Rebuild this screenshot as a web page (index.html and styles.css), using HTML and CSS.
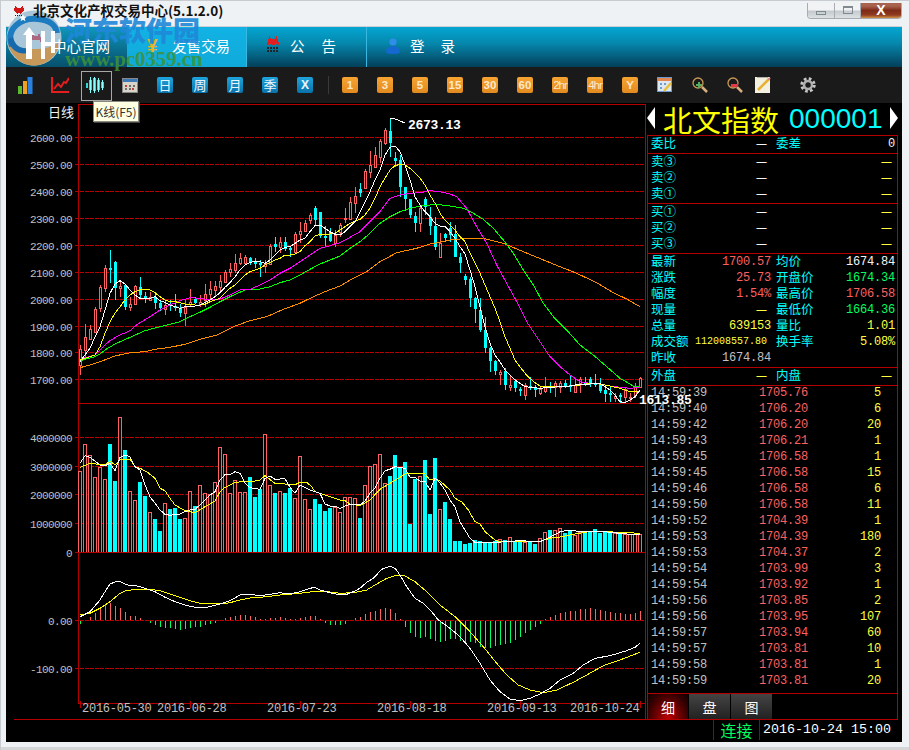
FILE: index.html
```html
<!DOCTYPE html>
<html lang="zh-CN">
<head>
<meta charset="utf-8">
<title>北京文化产权交易中心</title>
<link rel="stylesheet" href="styles.css">
</head>
<body>
<div class="window">
  <header class="titlebar">
    <svg class="app-icon" width="12" height="11" viewBox="0 0 12 11"><path fill="#d01818" d="M2 0h1v1h1v1h4V1h1V0h1v2h1v3h-1v1H9v1H8v1H7V7H5v1H4V7H3V6H2V5H1V2h1z"/><path fill="#202020" d="M2 9h1v1H2zM4 9h1v1H4zM6 9h1v1H6zM8 9h1v1H8z"/></svg>
    <span class="app-title">北京文化产权交易中心(5.1.2.0)</span>
    <div class="winbtns">
      <span class="winbtn win-min"><i></i></span>
      <span class="winbtn win-max"><i></i></span>
      <span class="winbtn win-close">X</span>
    </div>
  </header>

  <nav class="nav">
    <a class="nav-item nav-home"><span class="nav-over">中心官网</span></a>
    <a class="nav-item nav-active"><span class="yen">¥</span><span>发售交易</span></a>
    <a class="nav-item nav-notice">
      <svg width="14" height="19" viewBox="0 0 14 19"><path fill="#e02020" d="M3 0h1v2h1v1h4V2h1V0h1v3h1v3h1v3h-2V8H9v1H5V8H3v1H1V6h1V3h1z"/><path fill="#202428" d="M1 11h2v2H1zM4 11h2v2H4zM7 11h2v2H7zM10 11h2v2h-2zM1 14h2v2H1zM4 14h2v2H4zM7 14h2v2H7zM10 14h2v2h-2z"/></svg>
      <span class="nav-wide">公告</span>
    </a>
    <a class="nav-item nav-login">
      <svg width="14" height="16" viewBox="0 0 14 16"><circle cx="7" cy="4" r="3.6" fill="#2f8fe8"/><path fill="#1468d0" d="M7 8c4 0 7 3 7 6 0 1.300-3 2-7 2s-7-.7-7-2c0-3 3-6 7-6z"/></svg>
      <span class="nav-wide">登录</span>
    </a>
  </nav>

  <div class="toolbar">
    <span class="tool">
      <svg width="16" height="17" viewBox="0 0 16 17"><rect x="1" y="9" width="4" height="8" fill="#5cb82c"/><rect x="6" y="4" width="4" height="13" fill="#f0a020"/><rect x="10.500" width="5" height="17" fill="#2a80e0"/></svg>
    </span>
    <span class="tool">
      <svg width="18" height="16" viewBox="0 0 18 16"><path fill="none" stroke="#e41e1e" stroke-width="2" d="M1 0v15h18"/><path fill="none" stroke="#e41e1e" stroke-width="2" d="M3 12l4-5 3 3 3-5 2 1 3-5"/></svg>
    </span>
    <span class="tool tool-selected">
      <svg width="18" height="16" viewBox="0 0 18 16"><g fill="#35d8d0"><rect x="0" y="6" width="2" height="5"/><rect x="3" y="3" width="3" height="10"/><rect x="7" y="1" width="3" height="13"/><rect x="11" y="3" width="3" height="10"/><rect x="15" y="5" width="3" height="6"/></g><g fill="#8ff"><rect x="4" y="0" width="1" height="16"/><rect x="8" y="0" width="1" height="16"/><rect x="12" y="1" width="1" height="14"/><rect x="16" y="3" width="1" height="10"/></g></svg>
    </span>
    <span class="tool">
      <svg width="16" height="16" viewBox="0 0 16 16"><rect x=".5" y="1.500" width="15" height="14" fill="#d8d4c8" stroke="#888"/><rect x="1" y="2" width="14" height="3" fill="#3a78b8"/><path fill="#c04040" d="M3 8h2v2H3zM10 11h2v2h-2z"/><path fill="#707070" d="M7 8h2v2H7zM11 8h2v2h-2zM3 11h2v2H3zM7 11h2v2H7z"/></svg>
    </span>
    <span class="tool btn-blue">日</span>
    <span class="tool btn-blue">周</span>
    <span class="tool btn-blue">月</span>
    <span class="tool btn-blue">季</span>
    <span class="tool btn-blue btn-x">X</span>
    <span class="tool-sep"></span>
    <span class="tool btn-orange">1</span>
    <span class="tool btn-orange">3</span>
    <span class="tool btn-orange">5</span>
    <span class="tool btn-orange">15</span>
    <span class="tool btn-orange">30</span>
    <span class="tool btn-orange">60</span>
    <span class="tool btn-orange btn-narrow">2hr</span>
    <span class="tool btn-orange btn-narrow">4hr</span>
    <span class="tool btn-orange">Y</span>
    <span class="tool">
      <svg width="16" height="16" viewBox="0 0 16 16"><rect x=".5" y=".5" width="14" height="14" fill="#dfe8f0" stroke="#6a9ad0"/><rect x="1" y="1" width="13" height="3" fill="#e08850"/><path fill="#6aa0d0" d="M3 6h2v2H3zM7 6h2v2H7zM3 10h2v2H3z"/><path fill="none" stroke="#e8c040" stroke-width="2.500" d="M7 14l7-8"/></svg>
    </span>
    <span class="tool">
      <svg width="16" height="16" viewBox="0 0 16 16"><circle cx="6" cy="6" r="5" fill="none" stroke="#c89858" stroke-width="1.300"/><path stroke="#d8b080" stroke-width="2.500" d="M10 10l5 5"/><path fill="#50b060" d="M6 5h2v2h2v2H8v2H6V9H4V7h2z"/></svg>
    </span>
    <span class="tool tool-zoomout">
      <svg width="16" height="16" viewBox="0 0 16 16"><circle cx="6" cy="6" r="5" fill="none" stroke="#c89858" stroke-width="1.300"/><path stroke="#d8b080" stroke-width="2.500" d="M10 10l5 5"/><rect x="4" y="7" width="7" height="3" fill="#e03848"/></svg>
    </span>
    <span class="tool tool-note">
      <svg width="16" height="16" viewBox="0 0 16 16"><rect width="15" height="16" fill="#f4f0e0"/><path stroke="#b0b0a8" d="M2 .5h11"/><path fill="none" stroke="#e8b030" stroke-width="2.500" d="M3 13L14 2"/><path stroke="#e070a0" stroke-width="2" d="M13.500 2.500l1.500-1.500"/></svg>
    </span>
    <span class="tool">
      <svg width="16" height="16" viewBox="0 0 16 16"><circle cx="8" cy="8" r="6.200" fill="none" stroke="#c8c8c8" stroke-width="3" stroke-dasharray="2.600 2.270"/><circle cx="8" cy="8" r="4" fill="none" stroke="#b0b0b0" stroke-width="2.500"/></svg>
    </span>
    <span class="tooltip">K线(F5)</span>
  </div>

  <main class="main">
    <div class="chart"><svg id="chart" class="chart-svg" width="641" height="617" viewBox="6 103 641 617"></svg></div>
    <aside class="side">
      <div class="side-title">
        <span class="arrow arrow-left"></span>
        <span class="stock-name">北文指数</span>
        <span class="stock-code">000001</span>
        <span class="arrow arrow-right"></span>
      </div>
      <div class="side-box">
        <section class="sec sec-one">
          <div class="qrow"><div class="half"><span class="lab">委比</span><span class="dash white">一</span></div><div class="half"><span class="lab">委差</span><span class="num white">0</span></div></div>
        </section>
        <section class="sec sec-book">
          <div class="qrow"><div class="half"><span class="lab">卖③</span><span class="dash white">一</span></div><div class="half half-end"><span class="dash yellow">一</span></div></div>
          <div class="qrow"><div class="half"><span class="lab">卖②</span><span class="dash white">一</span></div><div class="half half-end"><span class="dash yellow">一</span></div></div>
          <div class="qrow"><div class="half"><span class="lab">卖①</span><span class="dash white">一</span></div><div class="half half-end"><span class="dash yellow">一</span></div></div>
        </section>
        <section class="sec sec-book">
          <div class="qrow"><div class="half"><span class="lab">买①</span><span class="dash white">一</span></div><div class="half half-end"><span class="dash yellow">一</span></div></div>
          <div class="qrow"><div class="half"><span class="lab">买②</span><span class="dash white">一</span></div><div class="half half-end"><span class="dash yellow">一</span></div></div>
          <div class="qrow"><div class="half"><span class="lab">买③</span><span class="dash white">一</span></div><div class="half half-end"><span class="dash yellow">一</span></div></div>
        </section>
        <section class="sec sec-stats">
          <div class="qrow"><div class="half"><span class="lab">最新</span><span class="num red">1700.57</span></div><div class="half"><span class="lab">均价</span><span class="num white">1674.84</span></div></div>
          <div class="qrow"><div class="half"><span class="lab">涨跌</span><span class="num red">25.73</span></div><div class="half"><span class="lab">开盘价</span><span class="num green">1674.34</span></div></div>
          <div class="qrow"><div class="half"><span class="lab">幅度</span><span class="num red">1.54%</span></div><div class="half"><span class="lab">最高价</span><span class="num red">1706.58</span></div></div>
          <div class="qrow"><div class="half"><span class="lab">现量</span><span class="dash yellow">一</span></div><div class="half"><span class="lab">最低价</span><span class="num green">1664.36</span></div></div>
          <div class="qrow"><div class="half"><span class="lab">总量</span><span class="num yellow">639153</span></div><div class="half"><span class="lab">量比</span><span class="num yellow">1.01</span></div></div>
          <div class="qrow"><div class="half"><span class="lab">成交额</span><span class="num yellow num-small">112008557.80</span></div><div class="half"><span class="lab">换手率</span><span class="num yellow">5.08%</span></div></div>
          <div class="qrow"><div class="half"><span class="lab">昨收</span><span class="num gray">1674.84</span></div><div class="half"></div></div>
        </section>
        <section class="sec sec-one">
          <div class="qrow"><div class="half"><span class="lab">外盘</span><span class="dash yellow">一</span></div><div class="half"><span class="lab">内盘</span><span class="dash yellow">一</span></div></div>
        </section>
        <section class="sec trades">
          <div class="trow"><span>14:59:39</span><span class="red">1705.76</span><span class="yellow">5</span></div>
          <div class="trow"><span>14:59:40</span><span class="red">1706.20</span><span class="yellow">6</span></div>
          <div class="trow"><span>14:59:42</span><span class="red">1706.20</span><span class="yellow">20</span></div>
          <div class="trow"><span>14:59:43</span><span class="red">1706.21</span><span class="yellow">1</span></div>
          <div class="trow"><span>14:59:45</span><span class="red">1706.58</span><span class="yellow">1</span></div>
          <div class="trow"><span>14:59:45</span><span class="red">1706.58</span><span class="yellow">15</span></div>
          <div class="trow"><span>14:59:46</span><span class="red">1706.58</span><span class="yellow">6</span></div>
          <div class="trow"><span>14:59:50</span><span class="red">1706.58</span><span class="yellow">11</span></div>
          <div class="trow"><span>14:59:52</span><span class="red">1704.39</span><span class="yellow">1</span></div>
          <div class="trow"><span>14:59:53</span><span class="red">1704.39</span><span class="yellow">180</span></div>
          <div class="trow"><span>14:59:53</span><span class="red">1704.37</span><span class="yellow">2</span></div>
          <div class="trow"><span>14:59:54</span><span class="red">1703.99</span><span class="yellow">3</span></div>
          <div class="trow"><span>14:59:54</span><span class="red">1703.92</span><span class="yellow">1</span></div>
          <div class="trow"><span>14:59:56</span><span class="red">1703.85</span><span class="yellow">2</span></div>
          <div class="trow"><span>14:59:56</span><span class="red">1703.95</span><span class="yellow">107</span></div>
          <div class="trow"><span>14:59:57</span><span class="red">1703.94</span><span class="yellow">60</span></div>
          <div class="trow"><span>14:59:57</span><span class="red">1703.81</span><span class="yellow">10</span></div>
          <div class="trow"><span>14:59:58</span><span class="red">1703.81</span><span class="yellow">1</span></div>
          <div class="trow"><span>14:59:59</span><span class="red">1703.81</span><span class="yellow">20</span></div>
        </section>
        <div class="tabs">
          <span class="tab tab-active">细</span>
          <span class="tab">盘</span>
          <span class="tab">图</span>
        </div>
      </div>
    </aside>
  </main>

  <footer class="status">
    <span class="status-conn">连接</span>
    <span class="status-time">2016-10-24 15:00</span>
  </footer>

  <div class="watermark">
    <svg class="wm-logo" width="58" height="58" viewBox="0 0 58 58">
      <circle cx="29" cy="29" r="27.500" fill="#a8c6d8"/>
      <path fill="#c6985a" d="M1.700 31C5 46 16 56.500 29 56.500S53 46 56.300 31C48 39 38 40 29 40S10 39 1.700 31z"/>
      <path fill="none" stroke="#1d7cc0" stroke-width="6" d="M7 37C0 20 16 8 33 10c11 1 18 6 19 14"/>
      <path fill="#1569ac" d="M3 30c2 12 12 16 20 14v-5c-7 1-13-2-15-11z"/>
      <path fill="#b02848" opacity=".6" d="M27 25h2v2h4v-2h2v3h2v5h-2v-2h-8v2h-2v-5h2z"/>
      <path fill="#fff" d="M24 18l6 8h-3v24h-6V26h-3zM36 22h4v11h6V22h4v22h-4v-7h-6v13h-4z"/>
      <path fill="#fff" d="M18 5l1 2.500 2.700.2-2 1.800.7 2.700-2.400-1.500-2.400 1.500.7-2.700-2-1.800 2.700-.2z"/>
    </svg>
    <div class="wm-text">
      <span class="wm-cn">河东软件园</span>
      <span class="wm-url">www.pc0359.cn</span>
    </div>
  </div>
</div>
<script src="chart.js"></script>
</body>
</html>
```
FILE: styles.css
```css
* { box-sizing: border-box; }
html, body { margin: 0; padding: 0; background: #eff2f5; }
body { width: 910px; height: 750px; overflow: hidden; font-family: "Noto Sans CJK SC", "Liberation Sans", sans-serif; }

.window { position: relative; width: 910px; height: 750px; display: flex; flex-direction: column; padding: 0 8px 8px 6px; background: #eff2f5; border-top: 1px solid #c8ccd0; box-shadow: inset 1px 0 #c8ccd0, inset -1px 0 #c8ccd0, inset 0 -3px #d4d6d8; }

/* title bar */
.titlebar { height: 26px; flex: none; display: flex; align-items: center; border-bottom: 1px solid #ccd0d4; position: relative; }
.app-icon { margin: -4px 8px 0 7px; position: relative; z-index: 5; }
.app-title { font-size: 13.500px; font-weight: 700; color: #101010; line-height: 18px; margin-top: -7px; position: relative; z-index: 5; }
.winbtns { margin-left: auto; margin-right: 0; margin-top: -6px; display: flex; height: 16px; border: 1px solid #a8acb0; border-top: 0; border-radius: 0 0 4px 4px; overflow: hidden; }
.winbtn { display: flex; align-items: center; justify-content: center; background: linear-gradient(#f0f2f4 0 45%, #c4cacf 55%, #dde1e4); border-right: 1px solid #a8acb0; }
.win-min { width: 27px; }
.win-min i { width: 10px; height: 4px; border: 1px solid #808890; margin-top: 5px; }
.win-max { width: 26px; }
.win-max i { width: 10px; height: 8px; border: 1px solid #808890; border-top-width: 2px; }
.win-close { width: 40px; border-right: 0; color: #fff; font: 700 14px/14px "Liberation Sans", sans-serif; background: linear-gradient(#a8624e 0 20%, #7e2c18 50%, #8f3a20 80%, #d09040); }

/* nav */
.nav { height: 40px; flex: none; display: flex; color: #fff; font-size: 14.500px; background: linear-gradient(#04a6d2, #0688ae 40%, #033f59); }
.nav-item { height: 40px; display: flex; align-items: center; padding-bottom: 3px; border-right: 1px solid #38b8e0; }
.nav-home { width: 121px; padding-left: 46px; background: linear-gradient(#0f96bc, #06506c); border-right: 0; }
.nav-over { position: relative; z-index: 5; }
.nav-active { width: 120px; padding-left: 20px; background: linear-gradient(#12b2e4, #0faada); gap: 13px; }
.nav-notice { width: 120px; padding-left: 19px; gap: 10px; }
.nav-login { width: 200px; padding-left: 19px; gap: 10px; border-right: 0; }
.nav-notice .nav-wide { letter-spacing: 17px; }
.nav-login .nav-wide { letter-spacing: 16px; }
.yen { width: 12px; font: 700 19px/20px "Liberation Sans", sans-serif; color: #e8b428; }

/* toolbar */
.toolbar { position: relative; height: 36px; flex: none; display: flex; align-items: center; padding-left: 11px; background: #1a1a1a; }
.tool { position: relative; flex: none; width: 16px; height: 16px; margin-right: 19px; display: flex; align-items: center; justify-content: center; color: #fff; font-size: 12px; line-height: 16px; border-radius: 2px; }
.tool svg { flex: none; display: block; }
.tool-selected::after { content: ""; position: absolute; left: -6px; top: -6px; width: 29px; height: 28px; border: 1px solid #a8a8a8; }
.btn-blue { background: linear-gradient(#1ea4dc, #0a72aa); font-size: 13px; color: #e8f6ff; }
.btn-x { font: 700 12px/16px "Liberation Sans", sans-serif; }
.btn-orange { background: linear-gradient(#f6a432, #e28a20); color: #ffe8c8; font: 700 11.500px/16px "Liberation Sans", sans-serif; }
.btn-narrow { letter-spacing: -1px; font-weight: 400; }
.tool-sep { flex: none; width: 1px; height: 18px; margin: 0 13px 0 -4px; background: #3a3a3a; }
.tool-zoomout { margin-right: 12px; }
.tool-note { margin-right: 29px; }
.tooltip { position: absolute; left: 87px; top: 34px; z-index: 5; height: 21px; width: 46px; background: #ffffe1; border: 1px solid #8a8a80; box-shadow: 1px 1px 0 #444; color: #333; font-size: 12px; line-height: 19px; text-align: center; white-space: nowrap; }

/* main */
.main { height: 617px; flex: none; display: flex; background: #000; }
.chart { flex: none; width: 641px; height: 617px; position: relative; z-index: 2; }
.chart-svg { display: block; overflow: visible; }
.axis { font: 11px "Liberation Mono", monospace; letter-spacing: -.6px; fill: #c0c0c0; }
.axis-date { font: 12px "Liberation Mono", monospace; letter-spacing: -.25px; fill: #c0c0c0; }
.axis-name { font: 13px "Noto Sans CJK SC", sans-serif; fill: #f0f0f0; }
.mark { font: 700 13px "Liberation Mono", monospace; letter-spacing: -.3px; fill: #fff; }

/* side panel */
.side { flex: none; width: 251px; height: 617px; display: flex; flex-direction: column; }
.side-title { height: 32px; flex: none; display: flex; align-items: center; position: relative; padding-left: 16px; }
.arrow { position: absolute; top: 4px; width: 0; height: 0; border-top: 11px solid transparent; border-bottom: 11px solid transparent; }
.arrow-left { left: 0; border-right: 8px solid #fff; }
.arrow-right { right: 0; border-left: 8px solid #fff; }
.stock-name { color: #ffff00; font-size: 29px; line-height: 32px; white-space: nowrap; }
.stock-code { color: #00ffff; font: 28px/32px "Liberation Sans", sans-serif; margin-left: 10px; }
.side-box { flex: 1; border: 1px solid #b40000; display: flex; flex-direction: column; }
.sec { border-bottom: 1px solid #b40000; flex: none; }
.sec-one { height: 18px; }
.sec-book { height: 50px; }
.sec-stats { height: 114px; }
.qrow { height: 16px; display: flex; padding: 0 1px 0 3px; gap: 5px; align-items: center; }
.half { width: 120px; display: flex; justify-content: space-between; align-items: center; }
.half-end { justify-content: flex-end; }
.half + .half { width: 119px; }
.lab { color: #00ffff; font-size: 12.500px; line-height: 16px; white-space: nowrap; margin-bottom: 2px; }
.num { font: 12px/16px "Liberation Mono", monospace; letter-spacing: -.2px; white-space: nowrap; }
.num-small { font-size: 10px; letter-spacing: 0; margin-right: 4px; }
.dash { font-size: 11px; line-height: 16px; margin-right: 4px; }
.half + .half .dash { margin-right: 3px; }
.white { color: #f4f4f4; }
.gray { color: #c0c0c0; }
.red { color: #ff6060; }
.green { color: #00ff60; }
.yellow { color: #ffff40; }
.trades { height: 308px; padding-top: 0; overflow: visible; }
.trow { height: 16px; display: grid; grid-template-columns: 108px 60px 62px; padding-left: 3px; font: 12px/16px "Liberation Mono", monospace; letter-spacing: -.2px; color: #c0c0c0; position: relative; top: -1px; }
.trow span:last-child { text-align: right; }
.tabs { flex: 1; display: flex; gap: 1px; }
.tab { width: 41px; height: 25px; display: flex; align-items: center; justify-content: center; color: #fff; font-size: 14px; background: linear-gradient(#444, #222); }
.tab-active { width: 40px; background: radial-gradient(ellipse at 50% 100%, #c00000, #300000 75%, #100000); }

/* status */
.status { height: 22px; flex: none; background: #000; display: flex; padding-left: 707px; align-items: flex-start; }
.status-conn { width: 47px; height: 20px; border-left: 1px solid #a00000; border-right: 1px solid #a00000; color: #00ff60; font-size: 16px; line-height: 20px; text-align: center; white-space: nowrap; }
.status-time { margin-left: 3px; color: #fff; font: 13.330px/20px "Liberation Mono", monospace; white-space: nowrap; }

/* watermark */
.watermark { position: absolute; left: 5px; top: 8px; z-index: 4; display: flex; gap: 2px; pointer-events: none; }
.wm-logo { flex: none; }
.wm-text { display: flex; flex-direction: column; margin-top: 6px; }
.wm-cn { font-size: 27px; font-weight: 900; line-height: 29px; color: #1f88d8; opacity: .9; white-space: nowrap; }
.wm-url { font: 700 21px/22px "Liberation Serif", serif; color: #3e9238; opacity: .85; white-space: nowrap; letter-spacing: -.1px; margin-top: 4px; }
```
FILE: chart.js
```js
(function () {
  var svg = document.getElementById('chart');
  var NS = 'http://www.w3.org/2000/svg';
  function el(name, attrs, text) {
    var e = document.createElementNS(NS, name);
    for (var k in attrs) e.setAttribute(k, attrs[k]);
    if (text) e.textContent = text;
    svg.appendChild(e);
    return e;
  }
  var RED = '#ff6060', CYAN = '#00ffff', GRID = '#b80000', FRAME = '#b40000';
  function hline(y, x1, x2, dash) {
    var a = { x1: x1, x2: x2, y1: y + .5, y2: y + .5, stroke: dash ? GRID : FRAME, 'shape-rendering': 'crispEdges' };
    if (dash) a['stroke-dasharray'] = '4 1';
    el('line', a);
  }
  function vline(x, y1, y2, c) {
    el('line', { x1: x + .5, x2: x + .5, y1: y1, y2: y2, stroke: c || FRAME, 'shape-rendering': 'crispEdges' });
  }
  function box(x, y, w, h, fill, stroke) {
    var a = { x: x, y: y, width: w, height: h, fill: fill, 'shape-rendering': 'crispEdges' };
    if (stroke) a.stroke = stroke;
    el('rect', a);
  }
  function label(x, y, t, cls, anchor) {
    el('text', { x: x, y: y + 5, class: cls, 'text-anchor': anchor || 'start' }, t);
  }

  /* grids and frame */
  [137, 164, 191, 218, 245, 272, 299, 326, 352, 379].forEach(function (y) { hline(y, 75, 645, true); });
  [437, 466, 494, 523, 620, 668].forEach(function (y) { hline(y, 75, 645, true); });
  hline(104, 78, 645); hline(403, 78, 645); hline(552, 75, 645); hline(703, 78, 645); hline(719, 14, 647);
  vline(78, 104, 703); vline(645, 104, 719);
  [80, 190, 300, 410, 520, 640].forEach(function (x) { vline(x, 701, 708); });

  /* axis labels */
  label(74, 112, '日线', 'axis-name', 'end');
  ['2600.00', '2500.00', '2400.00', '2300.00', '2200.00', '2100.00', '2000.00', '1900.00', '1800.00', '1700.00'].forEach(function (t, i) {
    label(72, [137, 164, 191, 218, 245, 272, 299, 326, 352, 379][i], t, 'axis', 'end');
  });
  [['4000000', 437], ['3000000', 466], ['2000000', 494], ['1000000', 523], ['0', 552], ['0.00', 620], ['-100.00', 668]].forEach(function (p) {
    label(72, p[1], p[0], 'axis', 'end');
  });
  [['2016-05-30', 82], ['2016-06-28', 157], ['2016-07-23', 267], ['2016-08-18', 377], ['2016-09-13', 487], ['2016-10-24', 570]].forEach(function (p) {
    label(p[1], 707, p[0], 'axis-date');
  });

  /* candles: red?, body top, body bottom, high, low (zoom units, y = 100 + z/3), x = 80 + 5i */
  var C = [
    [1,748,795,735,825],[1,712,750,672,770],[1,687,717,675,720],[1,628,695,620,700],[1,560,625,555,635],[1,505,565,495,575],
    [0,505,510,450,548],[0,485,563,483,600],[1,558,565,545,592],[0,555,622,553,630],[1,612,622,590,632],[1,558,612,555,615],
    [0,560,585,530,598],[0,588,595,575,610],[1,592,600,575,602],[0,592,608,575,628],[0,608,624,600,632],[1,616,628,600,644],
    [0,612,618,600,632],[0,618,622,582,632],[0,625,638,612,652],[1,622,640,600,678],[1,605,612,567,622],[0,598,610,590,612],
    [1,605,612,585,622],[1,583,600,552,620],[1,568,583,543,598],[1,558,570,543,590],[1,543,560,525,575],[1,516,545,510,550],
    [1,508,516,490,530],[1,490,510,462,520],[1,475,490,460,495],[1,472,488,465,492],[0,475,487,470,495],[0,487,490,475,505],
    [0,490,492,480,530],[1,490,498,480,518],[1,438,492,432,495],[0,432,440,412,455],[1,427,442,410,458],[0,427,447,410,452],
    [0,445,448,442,470],[1,403,455,395,460],[1,393,402,365,430],[1,370,392,360,395],[1,345,360,340,372],[0,325,360,318,375],
    [0,337,408,336,415],[0,408,410,378,440],[0,395,422,385,425],[1,405,430,390,440],
    [1,375,395,370,410],[1,355,358,325,368],[1,305,358,292,360],[1,287,308,262,340],[0,267,280,250,290],[1,212,265,208,268],
    [1,196,215,153,233],[1,165,200,140,205],[1,122,170,118,190],[1,90,128,85,135],[0,92,130,55,170],[0,175,182,155,200],
    [0,180,260,165,290],[0,262,297,262,332],[0,297,345,297,355],[0,348,370,335,395],[1,325,370,322,395],[0,298,320,292,345],
    [0,352,378,322,405],[0,378,440,350,450],[1,428,470,400,473],[0,402,415,398,425],[0,385,405,365,425],[0,402,470,375,472],
    [0,470,488,460,518],[0,528,540,522,555],[0,537,595,530,622],[0,595,628,590,668],[0,630,690,595,695],[0,690,745,650,760],
    [0,745,782,742,815],[0,783,812,780,825],[1,815,822,810,855],[0,812,855,805,870],[1,855,862,825,872],[0,842,865,838,875],
    [0,868,872,860,888],[1,855,885,850,900],[0,858,862,830,870],[0,865,868,855,892],[1,868,880,860,885],[1,858,872,830,878],
    [0,858,862,845,880],[1,848,860,842,892],[1,848,860,842,880],[0,850,858,840,865],[0,855,860,828,875],[1,855,875,838,880],
    [1,838,850,832,880],[0,845,850,830,858],[0,838,850,830,862],[0,848,852,822,862],[0,852,872,835,880],[0,870,882,860,905],
    [0,880,885,860,905],[1,888,895,880,905],[0,885,892,880,910],[1,868,890,860,908],[1,890,895,880,905],[1,860,885,850,895],
    [1,835,860,832,862]
  ];
  function py(z) { return Math.round(100 + z / 3); }
  C.forEach(function (c, i) {
    var x = 80 + 5 * i, col = c[0] ? RED : CYAN, t = py(c[1]), b = py(c[2]), hi = py(c[3]), lo = py(c[4]);
    box(x, hi, 1, Math.max(lo - hi, 1), col);
    if (c[0]) box(x - 1 + .5, t + .5, 2, Math.max(b - t, 1), '#000', col);
    else box(x - 1, t, 3, Math.max(b - t, 2), col);
  });

  function line(a, b, ox1, ox2, oy, col, w) {
    var pts = [];
    for (var i = 0; i < a.length; i += 2) pts.push((ox1 + a[i] / 3).toFixed(1) + ',' + (oy + a[i + 1] / 3).toFixed(1));
    for (var j = 0; j < b.length; j += 2) pts.push((ox2 + b[j] / 3).toFixed(1) + ',' + (oy + b[j + 1] / 3).toFixed(1));
    el('polyline', { points: pts.join(' '), fill: 'none', stroke: col, 'stroke-width': w || 1, 'shape-rendering': 'crispEdges' });
  }

  /* price moving averages */
  line([120,803,150,795,180,785,225,768,270,758,315,755,345,748,390,742,435,733,480,718,530,705,585,678,630,662,680,650,730,628,780,610,820,590,860,573,900,558],
       [40,535,80,515,120,485,170,458,230,445,270,432,330,420,380,415,430,415,490,430,550,455,640,492,710,520,770,548,820,578,860,597,900,620], 40, 340, 100, '#ff8c00');
  line([120,782,165,770,180,762,195,750,225,732,270,712,315,692,360,680,420,665,450,650,480,637,510,622,540,605,570,590,615,570,660,567,690,560,720,548,750,540,780,525,810,508,840,492,870,480,900,468],
       [30,445,60,425,90,400,120,370,150,350,180,335,210,325,240,318,290,313,330,318,370,325,400,340,430,358,460,385,490,420,520,460,550,510,580,555,610,610,640,650,680,690,720,735,760,765,800,800,840,835,880,858,900,862], 40, 340, 100, '#00ff00');
  line([120,778,165,765,180,750,195,735,210,722,225,713,240,705,270,692,285,678,300,668,330,650,360,630,390,615,420,602,450,593,480,595,510,600,540,597,570,585,600,570,630,568,660,555,690,540,720,520,750,505,780,485,810,465,840,445,870,437,900,428],
       [30,412,60,395,90,365,120,335,150,295,180,285,210,280,240,278,270,272,300,275,330,282,350,290,380,325,410,380,440,430,470,495,500,550,530,605,560,665,590,710,630,770,660,800,690,825,720,845,750,850,780,852,810,858,840,862,870,865,900,862], 40, 340, 100, '#ff00ff');
  line([120,780,165,765,180,740,195,700,210,665,225,640,240,620,255,600,270,585,285,575,300,570,315,568,330,570,345,578,360,590,375,600,390,605,405,605,420,608,435,612,450,613,465,615,480,615,495,613,510,605,525,600,540,595,555,580,570,565,585,555,600,540,615,525,630,515,645,510,660,505,675,495,690,488,705,480,720,475,735,465,750,465,765,462,780,455,795,437,810,425,825,408,840,403,855,403,870,402,885,400,900,390],
       [15,380,30,370,60,358,75,345,90,325,105,295,120,260,135,235,150,210,165,197,180,193,195,195,210,205,225,220,240,235,255,255,270,285,285,310,300,340,315,360,330,375,345,390,360,410,375,425,390,460,405,490,420,520,435,555,450,590,465,625,480,665,495,710,510,745,525,780,540,800,555,820,570,835,585,848,600,858,630,860,660,858,690,858,720,855,750,850,780,852,810,858,840,865,870,875,900,875], 40, 340, 100, '#ffff00');
  line([120,785,135,765,150,745,165,710,180,680,195,630,210,580,225,552,240,542,255,552,270,570,285,585,300,595,315,595,330,595,345,590,360,602,375,607,390,615,405,620,420,625,435,620,450,618,465,618,480,615,495,607,510,600,525,590,540,578,555,562,570,548,585,530,600,510,615,495,630,487,645,485,660,485,675,490,690,480,705,465,720,450,735,442,750,440,765,430,780,420,795,415,810,395,825,377,840,375,855,385,870,395,885,403,900,405],
       [15,395,30,380,45,365,60,335,75,305,90,275,105,240,120,210,135,165,150,142,165,138,180,155,195,195,210,240,225,290,240,315,255,335,270,350,285,370,300,378,315,380,330,395,345,415,360,440,375,462,390,510,405,560,420,620,435,680,450,730,465,765,480,785,495,810,510,825,525,840,540,850,555,860,570,862,600,865,630,862,660,860,690,858,720,852,750,852,780,850,795,860,810,870,825,885,840,905,855,908,870,900,885,890,900,870], 40, 340, 100, '#ffffff');

  /* high / low markers */
  el('polyline', { points: '390,118.500 394,118.500 405,123', fill: 'none', stroke: '#fff', 'shape-rendering': 'crispEdges' });
  el('text', { x: 408, y: 129, class: 'mark' }, '2673.13');
  el('text', { x: 639, y: 404, class: 'mark' }, '1613.85');

  /* volume: positive = red hollow, negative = cyan filled; top in zoom units, y = 400 + z/3 */
  var V = [212,133,166,232,202,238,-132,-243,52,-150,274,301,-246,-288,337,-357,-393,310,-327,-324,-357,355,274,-318,256,280,283,247,142,163,280,241,277,277,-231,-291,-268,103,256,-279,274,-279,-263,295,169,298,328,-297,-312,-333,-324,320,
    337,290,292,295,-354,256,198,193,163,250,-228,-165,-203,-186,-372,-237,229,-180,-342,-174,328,-306,-357,-423,-423,-432,-429,-420,-423,-426,-429,-423,418,-420,412,-423,-426,426,-426,-432,415,397,-390,390,385,-400,-393,405,395,-393,-395,-388,-398,-395,-398,400,-398,403,403,403,401];
  V.forEach(function (v, i) {
    var x = 80 + 5 * i, t = Math.round(400 + Math.abs(v) / 3);
    if (v > 0) box(x - 1.5, t + .5, 3, 551.5 - t, '#000', RED);
    else box(x - 2, t, 4, 552 - t, CYAN);
  });
  hline(552, 78, 645);
  line([120,202,150,190,195,195,210,183,225,195,240,180,270,178,285,200,300,205,320,215,345,235,360,265,375,272,390,295,405,315,435,332,465,338,495,320,525,303,540,275,555,262,585,248,615,243,645,243,660,240,675,227,705,250,735,252,765,254,780,247,800,247,815,260,825,275,855,285,885,295,900,300],
       [15,302,30,312,60,317,90,300,120,268,150,250,180,232,195,222,225,220,255,222,270,240,285,235,300,243,330,270,345,295,365,305,385,330,405,365,420,372,435,395,465,420,480,426,520,424,600,424,630,415,660,411,700,403,745,395,820,396,900,400], 40, 340, 400, '#ffff00');
  line([120,190,135,167,150,172,165,183,180,195,195,197,210,190,225,212,240,172,255,165,270,170,285,200,300,210,315,255,330,290,345,310,360,330,375,343,390,346,405,344,420,342,435,335,450,330,465,328,480,315,495,300,510,285,525,275,540,240,555,224,570,224,585,215,600,220,615,250,630,263,660,268,675,235,690,228,705,238,735,236,750,262,765,280,780,255,810,270,840,280,855,312,870,318,885,318,900,325],
       [30,312,60,315,75,303,90,280,105,265,120,235,135,212,150,208,165,200,195,205,210,232,225,232,240,243,255,243,270,270,285,235,300,250,315,270,330,300,345,320,360,365,375,390,390,415,405,427,470,427,540,422,600,425,630,412,660,395,690,390,720,395,800,396,820,398,860,402,900,402], 40, 340, 400, '#ffffff');

  /* MACD histogram: [x, top/bottom z] ; y = 560 + z/3 ; zero line z = 181 */
  var H1 = [[120,188],[150,170],[165,158],[180,145],[195,133],[210,128],[225,138],[240,145],[255,156],[270,168],[285,168],[300,174],[330,186],[345,192],[360,198],[375,201],[390,202],[405,205],[420,207],[435,204],[450,201],[465,198],[480,198],[495,192],[510,189],[525,186],[555,174],[570,171],[585,168],[600,165],[615,165],[630,168],[645,171],[660,177],[675,177],[690,174],[705,174],[720,171],[735,174],[750,177],[765,177],[780,174],[795,171],[810,168],[825,168],[840,177],[855,185],[870,192],[885,192]];
  var H2 = [[0,192],[15,189],[45,174],[60,171],[75,162],[90,156],[105,153],[120,147],[135,144],[150,147],[165,159],[180,177],[195,198],[210,216],[225,228],[240,231],[255,228],[270,234],[285,240],[300,243],[315,240],[330,234],[345,234],[360,240],[375,243],[390,243],[405,246],[420,258],[435,261],[450,261],[465,255],[480,252],[495,249],[510,246],[525,237],[540,228],[555,216],[570,207],[585,198],[600,189],[615,177],[630,171],[645,165],[660,159],[675,156],[690,153],[705,153],[720,147],[735,147],[750,144],[765,147],[780,150],[795,153],[810,156],[825,159],[840,159],[855,162],[870,162],[885,159],[900,153]];
  function hist(list, ox) {
    list.forEach(function (p) {
      var x = Math.round(ox + p[0] / 3), y = Math.round(560 + p[1] / 3);
      if (y < 620) box(x, y, 1, 620 - y, RED);
      else box(x, 621, 1, y - 620, '#00ff60');
    });
  }
  hist(H1, 40); hist(H2, 340);
  line([120,164,150,160,180,145,210,125,240,100,255,93,285,88,330,88,360,92,390,102,420,112,450,122,480,130,540,132,570,128,600,120,630,114,680,110,720,105,780,100,835,93,870,96,900,100],
       [40,98,80,90,110,72,140,55,170,46,195,48,225,65,260,95,300,135,345,170,390,215,430,260,470,310,500,345,535,375,570,390,610,398,650,390,700,367,740,345,790,317,840,300,900,277], 40, 340, 560, '#ffff00');
  line([120,170,150,155,180,120,195,95,210,72,225,66,240,65,270,78,285,76,315,85,345,95,375,112,405,125,435,135,465,142,500,142,540,132,570,122,600,105,630,103,660,107,690,103,720,98,750,102,780,95,810,85,825,82,840,90,870,98,900,105],
       [20,103,40,95,60,85,80,67,100,55,125,28,150,19,165,25,180,45,200,80,225,115,250,130,275,155,295,180,330,205,360,230,390,265,420,310,450,360,480,395,510,417,540,422,570,415,600,402,630,385,660,360,700,340,730,315,765,295,810,287,860,272,885,262,900,250], 40, 340, 560, '#ffffff');
})();
```
